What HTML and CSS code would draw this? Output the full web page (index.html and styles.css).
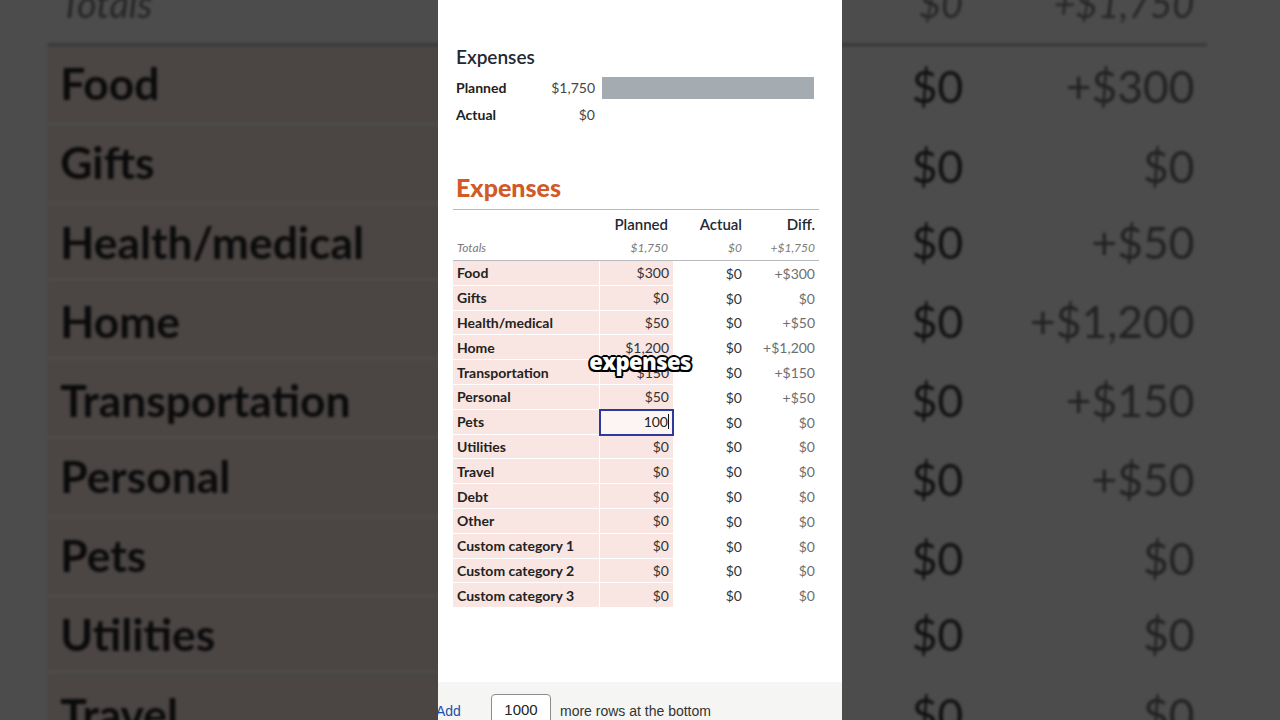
FILE: index.html
```html
<!DOCTYPE html>
<html lang="en">
<head>
<meta charset="utf-8">
<title>Expenses</title>
<link rel="stylesheet" href="styles.css">
</head>
<body>
<div class="stage">
  <div class="backdrop" aria-hidden="true">
    <div class="panel">
      <div class="summary">
        <h2 class="sum-title">Expenses</h2>
        <div class="sum-row first"><span class="sum-label">Planned</span><span class="sum-value">$1,750</span><span class="sum-bar"></span></div>
        <div class="sum-row"><span class="sum-label">Actual</span><span class="sum-value">$0</span></div>
      </div>
      <div class="section">
        <h1 class="sec-title">Expenses</h1>
        <div class="thead">
          <div class="hrow"><span></span><span class="num">Planned</span><span class="num">Actual</span><span class="num">Diff.</span></div>
          <div class="hrow totals"><span class="lbl">Totals</span><span class="num">$1,750</span><span class="num">$0</span><span class="num">+$1,750</span></div>
        </div>
        <div class="tbody">
          <div class="row"><span class="name">Food</span><span class="plan">$300</span><span class="act">$0</span><span class="diff">+$300</span></div>
          <div class="row"><span class="name">Gifts</span><span class="plan">$0</span><span class="act">$0</span><span class="diff">$0</span></div>
          <div class="row"><span class="name">Health/medical</span><span class="plan">$50</span><span class="act">$0</span><span class="diff">+$50</span></div>
          <div class="row"><span class="name">Home</span><span class="plan">$1,200</span><span class="act">$0</span><span class="diff">+$1,200</span></div>
          <div class="row"><span class="name">Transportation</span><span class="plan">$150</span><span class="act">$0</span><span class="diff">+$150</span></div>
          <div class="row"><span class="name">Personal</span><span class="plan">$50</span><span class="act">$0</span><span class="diff">+$50</span></div>
          <div class="row"><span class="name">Pets</span><span class="plan">$0</span><span class="act">$0</span><span class="diff">$0</span></div>
          <div class="row"><span class="name">Utilities</span><span class="plan">$0</span><span class="act">$0</span><span class="diff">$0</span></div>
          <div class="row"><span class="name">Travel</span><span class="plan">$0</span><span class="act">$0</span><span class="diff">$0</span></div>
          <div class="row"><span class="name">Debt</span><span class="plan">$0</span><span class="act">$0</span><span class="diff">$0</span></div>
          <div class="row"><span class="name">Other</span><span class="plan">$0</span><span class="act">$0</span><span class="diff">$0</span></div>
          <div class="row"><span class="name">Custom category 1</span><span class="plan">$0</span><span class="act">$0</span><span class="diff">$0</span></div>
          <div class="row"><span class="name">Custom category 2</span><span class="plan">$0</span><span class="act">$0</span><span class="diff">$0</span></div>
          <div class="row"><span class="name">Custom category 3</span><span class="plan">$0</span><span class="act">$0</span><span class="diff">$0</span></div>
        </div>
      </div>
    </div>
  </div>

  <div class="panel main">
    <div class="summary">
      <h2 class="sum-title">Expenses</h2>
      <div class="sum-row first"><span class="sum-label">Planned</span><span class="sum-value">$1,750</span><span class="sum-bar"></span></div>
      <div class="sum-row"><span class="sum-label">Actual</span><span class="sum-value">$0</span></div>
    </div>
    <div class="section">
      <h1 class="sec-title">Expenses</h1>
      <div class="thead">
        <div class="hrow"><span></span><span class="num">Planned</span><span class="num">Actual</span><span class="num">Diff.</span></div>
        <div class="hrow totals"><span class="lbl">Totals</span><span class="num">$1,750</span><span class="num">$0</span><span class="num">+$1,750</span></div>
      </div>
      <div class="tbody">
        <div class="row"><span class="name">Food</span><span class="plan">$300</span><span class="act">$0</span><span class="diff">+$300</span></div>
        <div class="row"><span class="name">Gifts</span><span class="plan">$0</span><span class="act">$0</span><span class="diff">$0</span></div>
        <div class="row"><span class="name">Health/medical</span><span class="plan">$50</span><span class="act">$0</span><span class="diff">+$50</span></div>
        <div class="row"><span class="name">Home</span><span class="plan">$1,200</span><span class="act">$0</span><span class="diff">+$1,200</span></div>
        <div class="row"><span class="name">Transportation</span><span class="plan">$150</span><span class="act">$0</span><span class="diff">+$150</span></div>
        <div class="row"><span class="name">Personal</span><span class="plan">$50</span><span class="act">$0</span><span class="diff">+$50</span></div>
        <div class="row"><span class="name">Pets</span><span class="plan editing">100<span class="caret"></span></span><span class="act">$0</span><span class="diff">$0</span></div>
        <div class="row"><span class="name">Utilities</span><span class="plan">$0</span><span class="act">$0</span><span class="diff">$0</span></div>
        <div class="row"><span class="name">Travel</span><span class="plan">$0</span><span class="act">$0</span><span class="diff">$0</span></div>
        <div class="row"><span class="name">Debt</span><span class="plan">$0</span><span class="act">$0</span><span class="diff">$0</span></div>
        <div class="row"><span class="name">Other</span><span class="plan">$0</span><span class="act">$0</span><span class="diff">$0</span></div>
        <div class="row"><span class="name">Custom category 1</span><span class="plan">$0</span><span class="act">$0</span><span class="diff">$0</span></div>
        <div class="row"><span class="name">Custom category 2</span><span class="plan">$0</span><span class="act">$0</span><span class="diff">$0</span></div>
        <div class="row"><span class="name">Custom category 3</span><span class="plan">$0</span><span class="act">$0</span><span class="diff">$0</span></div>
      </div>
    </div>
    <div class="bottom-bar">
      <span class="add">Add</span>
      <span class="count">1000</span>
      <span class="more">more rows at the bottom</span>
    </div>
    <div class="caption">expenses</div>
  </div>
</div>
</body>
</html>
```

FILE: styles.css
```css
* { box-sizing: border-box; }

body {
  margin: 0;
  background: #4d4d4d;
  overflow: hidden;
  font-family: Lato, "Noto Sans", sans-serif;
}

.stage {
  position: relative;
  width: 1280px;
  height: 720px;
  display: flex;
  justify-content: center;
  overflow: hidden;
}

.backdrop {
  position: absolute;
  inset: 0;
  display: flex;
  justify-content: center;
  transform: scale(3.168);
  transform-origin: 640px 360px;
  filter: brightness(0.3) blur(0.5px);
}

.panel {
  width: 404px;
  height: 720px;
  background: #fff;
  display: flex;
  flex-direction: column;
  overflow: hidden;
}

.main {
  position: relative;
  z-index: 1;
}

/* summary block */
.summary {
  padding: 45px 0 0 18px;
}

.sum-title {
  margin: 0;
  font-size: 19px;
  line-height: 24px;
  font-weight: 600;
  color: #1f2933;
}

.sum-row {
  display: flex;
  align-items: center;
  height: 27px;
  font-size: 14px;
}

.sum-row.first { margin-top: 5px; }

.sum-label {
  width: 80px;
  font-weight: 700;
  color: #222;
}

.sum-value {
  width: 59px;
  text-align: right;
  color: #444;
}

.sum-bar {
  margin-left: 7px;
  width: 212px;
  height: 22px;
  background: #a4abb1;
}

/* table section */
.section {
  margin-top: 45px;
  padding-left: 15px;
}

.sec-title {
  margin: 0 0 8px 3px;
  font-size: 25px;
  line-height: 28px;
  font-weight: 900;
  color: #d15a27;
}

.thead {
  width: 366px;
  border-top: 1px solid #b7bbbf;
  border-bottom: 1px solid #b7bbbf;
}

.hrow,
.row {
  display: grid;
  grid-template-columns: 147px 73px 73px 73px;
}

.hrow {
  height: 27px;
  align-items: center;
  font-size: 15px;
  font-weight: 600;
  color: #1f2933;
}

.hrow .num {
  text-align: right;
  padding-right: 4px;
}

.hrow .num:nth-child(2) { padding-right: 5px; }

.hrow.totals {
  height: 23px;
  padding-bottom: 3px;
  font-size: 12px;
  font-weight: 400;
  font-style: italic;
  color: #7b7b7b;
}

.totals .lbl { padding-left: 4px; }

.tbody { width: 366px; }

.row {
  height: 24.8px;
  font-size: 14px;
}

.row > span {
  display: flex;
  align-items: center;
  justify-content: flex-end;
  padding-right: 4px;
}

.row .name {
  justify-content: flex-start;
  padding-left: 4px;
  font-weight: 700;
  color: #222;
  background: #f9e5e1;
  border-right: 1px solid #fff;
  border-bottom: 1px solid #fff;
}

.row .plan {
  background: #f9e5e1;
  border-bottom: 1px solid #fff;
  color: #333;
}

.row .act { color: #333; }

.row .diff { color: #6e6e6e; }

.row .plan.editing {
  position: relative;
  background: #fdf5f3;
  outline: 2px solid #2b3a9b;
  outline-offset: -1px;
  color: #222;
}

.caret {
  display: inline-block;
  width: 1px;
  height: 15px;
  background: #111;
}

/* bottom bar */
.bottom-bar {
  margin-top: auto;
  height: 38px;
  background: #f5f6f4;
  display: flex;
  align-items: flex-start;
  padding-top: 12px;
  font-family: "Liberation Sans", Arial, sans-serif;
  font-size: 14px;
}

.add {
  margin-left: -2px;
  width: 55px;
  line-height: 34px;
  color: #1f4fa3;
}

.count {
  width: 60px;
  height: 32px;
  border: 1px solid #8d8d8d;
  border-radius: 4px;
  background: #fff;
  text-align: center;
  line-height: 30px;
  font-size: 15px;
  color: #222;
}

.more {
  margin-left: 9px;
  line-height: 34px;
  color: #333;
}

/* video caption overlay */
.caption {
  position: absolute;
  left: 0;
  right: 0;
  top: 347px;
  text-align: center;
  font-family: "Open Sans", sans-serif;
  font-weight: 800;
  font-size: 22px;
  line-height: 28px;
  letter-spacing: -0.6px;
  color: #fff;
  text-shadow:
    2px 0 0 #000, -2px 0 0 #000, 0 2px 0 #000, 0 -2px 0 #000,
    1.5px 1.5px 0 #000, -1.5px 1.5px 0 #000, 1.5px -1.5px 0 #000, -1.5px -1.5px 0 #000;
}
```
